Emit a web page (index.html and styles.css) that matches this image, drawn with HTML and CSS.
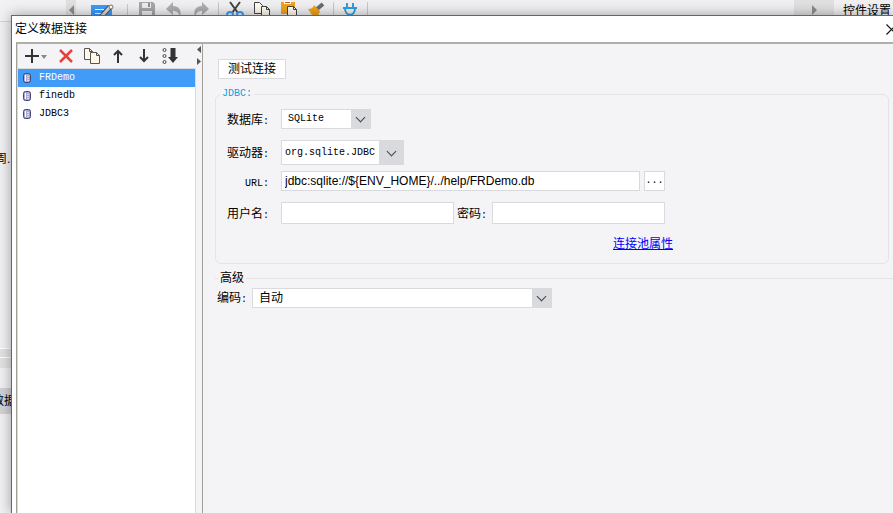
FILE: index.html
```html
<!doctype html>
<html lang="zh-CN">
<head>
  <meta charset="utf-8">
  <title>定义数据连接</title>
  <link rel="stylesheet" href="styles.css">
</head>
<body>
  <div class="app">
    <div class="side">
      <div class="side-head"></div>
      <div class="side-body"><span class="cut-one">周.</span></div>
      <div class="side-split"></div>
      <div class="side-split tall"></div>
      <div class="side-gap"></div>
      <div class="side-tab"><span class="cut-two">数据</span></div>
    </div>
    <div class="collapse">
      <svg width="5" height="10"><path d="M5 0v10L0 5z" fill="#8c8c8c"/></svg>
    </div>
    <div class="app-bar">
      <svg class="tools" width="300" height="24">
        <path d="M15 5h21v15h-21z" fill="#3d9afa"/>
        <path d="M19 9.500h9M19 13.500h6" stroke="#fff"/>
        <path d="M25 17l9-10" stroke="#555" stroke-width="5"/>
        <path d="M25 17l9-10" stroke="#d8d8dc" stroke-width="3"/>
        <circle cx="35" cy="7" r="2" fill="#fff" stroke="#777"/>
        <path d="M51.500 4v16M142.500 2v18M257.500 2v18M291.500 2v18" stroke="#c9c9cc"/>
        <path d="M63 2h14l2 2v14H63z" fill="#a6a6a9"/>
        <path d="M66 3h9v5h-9zM66 11h10v6h-10z" fill="#ececee"/>
        <path d="M72 3h2v4h-2z" fill="#8f8f92"/>
        <path d="M97 2l-7 7 7 6v-4c4 0 6 2 7 6 2-7-1-11-7-11z" fill="#adadb0"/>
        <path d="M126 2l7 7-7 6v-4c-4 0-6 2-7 6-2-7 1-11 7-11z" fill="#adadb0"/>
        <path d="M154 2l8 11M164 2l-8 11" stroke="#444" stroke-width="2"/>
        <circle cx="154" cy="15" r="3" fill="none" stroke="#3d9afa" stroke-width="2"/>
        <circle cx="164" cy="15" r="3" fill="none" stroke="#3d9afa" stroke-width="2"/>
        <path d="M178.500 2.500h5l3 3v8h-8z" fill="#fffbf0" stroke="#444"/>
        <path d="M185.500 6.500h5l3 3v9h-8z" fill="#fffbf0" stroke="#444"/>
        <path d="M190.500 6.500v3h3" fill="none" stroke="#444"/>
        <path d="M205 2h14v12h-14z" fill="#eda41c"/>
        <path d="M208 1h7v3h-7z" fill="#fff"/>
        <path d="M209 2h5v1h-5z" fill="#c9501c"/>
        <path d="M211.500 6.500h6l3 3v9h-9z" fill="#fffbf0" stroke="#444"/>
        <path d="M217.500 6.500v3h3" fill="none" stroke="#444"/>
        <path d="M241 9l6-5" stroke="#666a75" stroke-width="4"/>
        <path d="M238 5l6 6c-1 4-3 6-6 7l-6-9c3 0 5-1 6-4z" fill="#eda41c"/>
        <path d="M271 3v4M277 3v4M267 8h14M269 8c0 9 10 9 10 0M274 15v4" fill="none" stroke="#2d9fe0" stroke-width="2"/>
      </svg>
    </div>
    <div class="expand">
      <svg width="5" height="10"><path d="M0 0v10l5-5z" fill="#8c8c8c"/></svg>
    </div>
    <div class="widget-title">控件设置</div>
  </div>

  <div class="dialog">
    <header class="title-bar">
      <h1>定义数据连接</h1>
      <button class="close" aria-label="关闭">
        <svg width="11" height="11"><path d="M.5.500l10 10M10.500.500l-10 10" stroke="#111" stroke-width="1.200"/></svg>
      </button>
    </header>

    <main class="content">
      <section class="sources">
        <div class="actions">
          <button class="add" aria-label="新增">
            <svg width="23" height="16"><path d="M7 1v14M0 8h14" stroke="#333" stroke-width="2"/><path d="M16 7h6l-3 4z" fill="#888"/></svg>
          </button>
          <button aria-label="删除">
            <svg width="16" height="16"><path d="M2 2l12 12M14 2L2 14" stroke="#e8403a" stroke-width="2.500"/></svg>
          </button>
          <button aria-label="复制">
            <svg width="16" height="16" fill="#fff8e4" stroke="#555"><path d="M.5.500h5l3 3v8h-8z"/><path d="M5.500.500v3h3" fill="none"/><path d="M6.500 4.500h6l3 3v8h-9z"/><path d="M12.500 4.500v3h3" fill="none"/></svg>
          </button>
          <button aria-label="上移">
            <svg width="16" height="16" fill="none" stroke="#333" stroke-width="2"><path d="M8 15V3M4 7l4-4 4 4"/></svg>
          </button>
          <button aria-label="下移">
            <svg width="16" height="16" fill="none" stroke="#333" stroke-width="2"><path d="M8 1v12M4 9l4 4 4-4"/></svg>
          </button>
          <button aria-label="排序">
            <svg width="16" height="16"><path d="M8.500 0h5v9H16l-5 6-5-6h2.500z" fill="#333"/><g fill="none" stroke="#444"><circle cx="2.500" cy="2" r="1.500"/><circle cx="2.500" cy="8" r="1.500"/><circle cx="2.500" cy="14" r="1.500"/></g></svg>
          </button>
        </div>
        <ul class="list">
          <li class="active"><svg class="db" width="8" height="10"><rect x=".5" y=".5" width="7" height="9" rx="2" fill="#a9a9d2" stroke="#44446e"/><path d="M2.500 2v6" stroke="#fff"/><path d="M4 3.500h2M4 5.500h2M4 7.500h2" stroke="#dcdcf4"/></svg>FRDemo</li>
          <li><svg class="db" width="8" height="10"><rect x=".5" y=".5" width="7" height="9" rx="2" fill="#a9a9d2" stroke="#44446e"/><path d="M2.500 2v6" stroke="#fff"/><path d="M4 3.500h2M4 5.500h2M4 7.500h2" stroke="#dcdcf4"/></svg>finedb</li>
          <li><svg class="db" width="8" height="10"><rect x=".5" y=".5" width="7" height="9" rx="2" fill="#a9a9d2" stroke="#44446e"/><path d="M2.500 2v6" stroke="#fff"/><path d="M4 3.500h2M4 5.500h2M4 7.500h2" stroke="#dcdcf4"/></svg>JDBC3</li>
        </ul>
      </section>

      <div class="splitter">
        <svg width="5" height="20"><path d="M4 1v7L0 4.500zM0 13v7l4-3.500z" fill="#555"/></svg>
      </div>

      <form class="settings">
        <button type="button" class="test">测试连接</button>

        <fieldset class="jdbc">
          <legend>JDBC:</legend>
          <div class="row">
            <label for="database">数据库<i>:</i></label>
            <span class="select database"><select id="database"><option>SQLite</option></select></span>
          </div>
          <div class="row driver-row">
            <label for="driver">驱动器<i>:</i></label>
            <span class="select driver"><select id="driver"><option>org.sqlite.JDBC</option></select></span>
          </div>
          <div class="row">
            <label for="url"><i>URL:</i></label>
            <input id="url" class="url" type="text" value="jdbc:sqlite://${ENV_HOME}/../help/FRDemo.db">
            <button type="button" class="browse">...</button>
          </div>
          <div class="row user-row">
            <label for="user">用户名<i>:</i></label>
            <input id="user" class="user" type="text">
            <label for="password" class="inline">密码<i>:</i></label>
            <input id="password" class="user" type="password">
          </div>
          <a href="#" class="pool">连接池属性</a>
        </fieldset>

        <fieldset class="advanced">
          <legend>高级</legend>
          <div class="encoding-row">
            <label for="encoding">编码<i>:</i></label>
            <span class="select encoding"><select id="encoding"><option>自动</option></select></span>
          </div>
        </fieldset>
      </form>
    </main>
  </div>
</body>
</html>
```

FILE: styles.css
```css
* {
  box-sizing: border-box;
}
body {
  margin: 0;
  height: 100vh;
  overflow: hidden;
  position: relative;
  background: #f0f0f3;
  color: #000;
  font: 12px/16px "Liberation Sans", "Noto Sans CJK SC", sans-serif;
}
button, input, select {
  margin: 0;
  padding: 0;
  border: 1px solid #d9dadd;
  border-radius: 0;
  background: #fff;
  color: #000;
  font: inherit;
}
svg { display: block; flex: none; }
i {
  font: 10px/16px "Liberation Mono", monospace;
}

/* designer window behind the dialog */
.app {
  display: flex;
  height: 100%;
}
.side {
  display: flex;
  flex-direction: column;
  width: 66px;
  overflow: hidden;
  white-space: nowrap;
}
.side-head {
  height: 22px;
  border-bottom: 1px solid #d4d4d8;
  background: #f1f1f3;
}
.side-body {
  height: 326px;
  padding-top: 129px;
}
.cut-one { margin-left: -5px; }
.cut-two { margin-left: -8px; }
.side-split {
  height: 9px;
  border-top: 1px solid #fff;
  background: #e2e2e2;
}
.side-split.tall { height: 11px; }
.side-gap { height: 20px; }
.side-tab {
  height: 26px;
  padding-top: 5px;
  background: #d2d2d5;
}
.collapse, .expand {
  padding-top: 5px;
  background: #e0e0e0;
}
.collapse { width: 10px; padding-left: 3px; }
.expand { width: 40px; padding-left: 18px; }
.app-bar {
  flex: 1;
  overflow: hidden;
}
.widget-title {
  width: 59px;
  padding: 3px 0 0 9px;
  white-space: nowrap;
}

/* dialog */
.dialog {
  position: absolute;
  inset: 15px 0 0 11px;
  display: flex;
  flex-direction: column;
  overflow: hidden;
  border: solid #666;
  border-width: 1px 0 0 1px;
  background: #fff;
}
body::before {
  content: "";
  position: absolute;
  inset: 15px 0 0 11px;
  box-shadow: 0 0 12px rgba(0, 0, 0, .35);
}
.title-bar {
  display: flex;
  flex: none;
  align-items: center;
  justify-content: space-between;
  height: 26px;
  padding-left: 3px;
}
h1 {
  margin: 0;
  font-size: 12px;
  font-weight: normal;
}
.close {
  margin-right: -4px;
  border: 0;
}
.content {
  display: flex;
  flex: 1;
  margin-left: 4px;
  border: solid #a0a096;
  border-width: 2px 0 0 1px;
  border-top-color: #b0b0a8;
  background: #f4f4f7;
}
.sources {
  display: flex;
  flex-direction: column;
  width: 179px;
  border-left: 1px solid #d8d8ce;
}
.actions {
  display: flex;
  align-items: center;
  gap: 10px;
  height: 25px;
  padding-left: 7px;
  border-bottom: 1px solid #d9dadd;
}
.actions button {
  border: 0;
  background: none;
}
.list {
  flex: 1;
  margin: 0;
  padding: 0;
  list-style: none;
  border-right: 1px solid #d9dadd;
  background: #fff;
  font: 10px/20px "Liberation Mono", monospace;
}
.list li {
  display: flex;
  align-items: center;
  gap: 8px;
  height: 18px;
  padding-left: 5px;
}
.list .active {
  background: #419bf9;
  color: #fff;
}
.splitter {
  width: 7px;
  padding: 1px 0 0 1px;
  border-right: 1px solid #a0a096;
}
.settings {
  flex: 1;
  min-width: 0;
  padding: 15px 0 0 12px;
}
.test {
  display: block;
  width: 68px;
  height: 20px;
  margin-left: 3px;
}
fieldset {
  min-width: 0;
  margin: 0;
  padding: 0;
  border: 1px solid #e4e4e7;
}
.jdbc {
  height: 178px;
  margin: 7px 4px 0 0;
  border-radius: 6px;
}
.jdbc legend {
  margin-left: 4px;
  padding: 0 2px;
  color: #0c9fdb;
  font: 10px/16px "Liberation Mono", monospace;
}
.row {
  display: flex;
  align-items: center;
  height: 20px;
  margin-bottom: 11px;
}
.row:first-of-type { margin-top: 7px; }
.driver-row { height: 25px; margin-bottom: 6px; }
.user-row { height: 22px; margin-bottom: 12px; }
.row label {
  width: 53px;
  margin-right: 12px;
  padding-top: 4px;
  text-align: right;
  white-space: nowrap;
}
.row .inline {
  width: auto;
  margin: 0 5px 0 3px;
}
.driver-row label { padding-top: 2px; }
.row input, .row button {
  height: 100%;
}
.row input { padding: 0 3px; }
.url { width: 359px; }
.browse {
  width: 21px;
  margin-left: 4px;
  font: 10px/16px "Liberation Mono", monospace;
}
.user { width: 173px; }
.pool {
  display: block;
  width: 60px;
  margin-left: 397px;
  color: #00f;
  white-space: nowrap;
}
.select {
  position: relative;
  display: block;
  height: 100%;
}
.select select {
  width: 100%;
  height: 100%;
  padding: 0 20px 0 6px;
  border-right: 0;
  appearance: none;
  background: linear-gradient(#d9dadd, #d9dadd) right / 20px 100% no-repeat #fff;
}
.select::after {
  content: "";
  position: absolute;
  top: 50%;
  right: 7px;
  width: 6px;
  height: 6px;
  margin-top: -5px;
  border: solid #444;
  border-width: 0 1px 1px 0;
  transform: rotate(45deg);
  pointer-events: none;
}
.database { width: 90px; }
.driver { width: 123px; }
.database select, .driver select {
  font: 10px/16px "Liberation Mono", monospace;
}
.driver select {
  padding-left: 3px;
  background-size: 25px 100%;
}
.driver::after { right: 9px; }
.advanced {
  margin-top: 6px;
  border-width: 1px 0 0;
}
.advanced legend {
  margin-left: 3px;
  padding: 0 2px;
}
.encoding-row {
  display: flex;
  align-items: center;
  height: 20px;
  margin-top: 2px;
  padding-left: 2px;
}
.encoding-row label {
  width: 35px;
  padding-top: 2px;
  white-space: nowrap;
}
.encoding { width: 300px; }
```
